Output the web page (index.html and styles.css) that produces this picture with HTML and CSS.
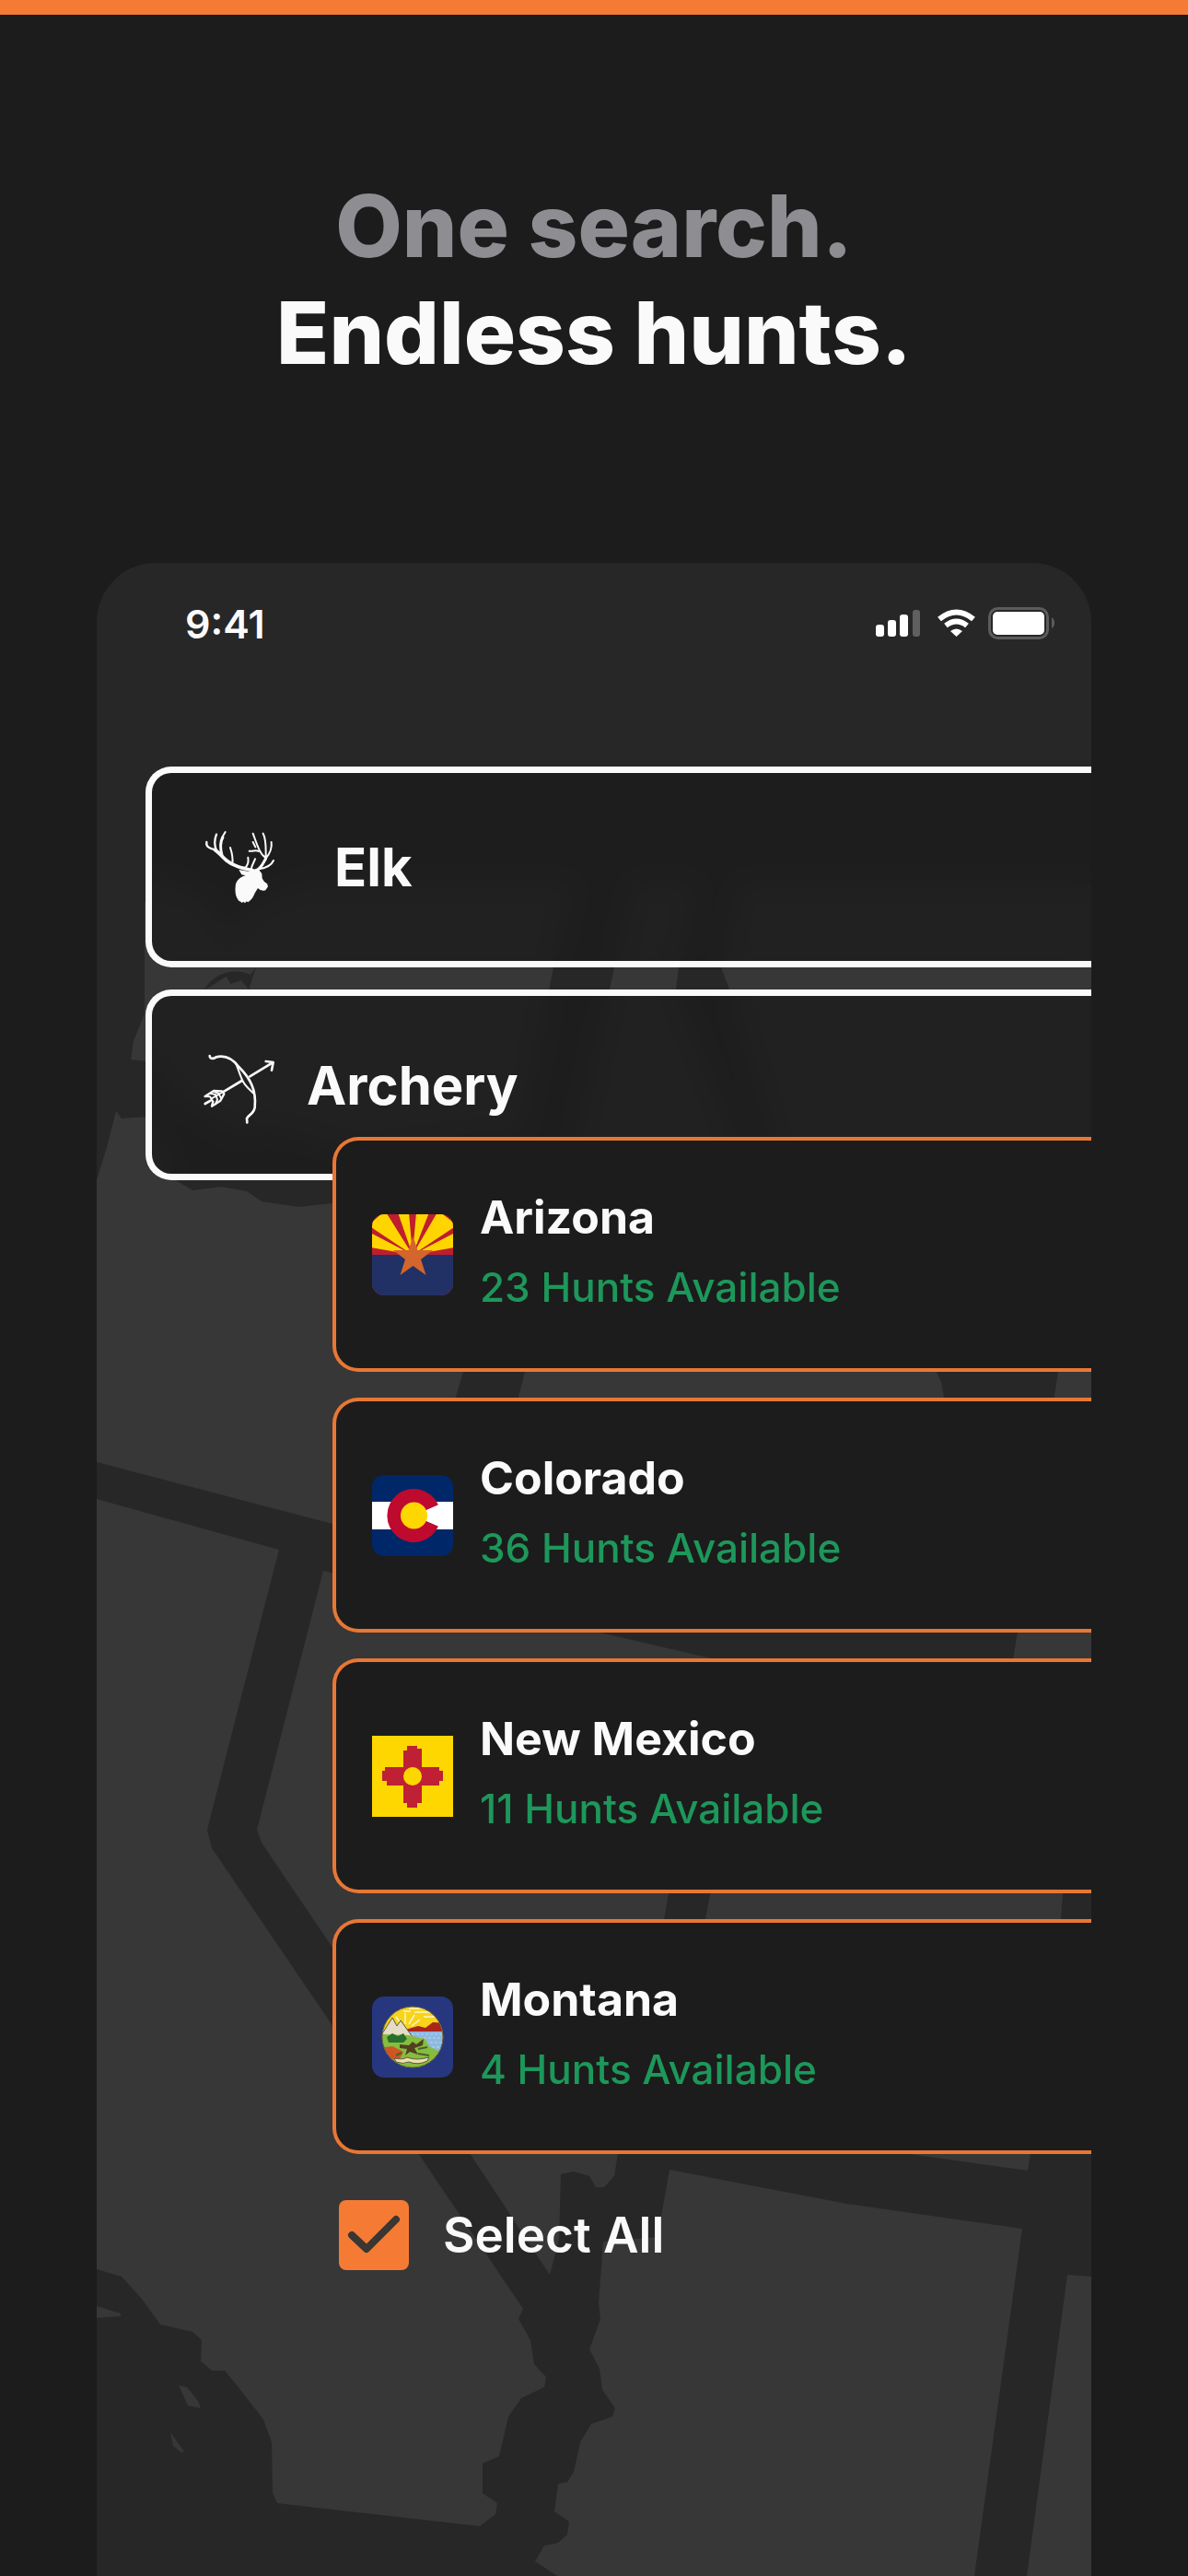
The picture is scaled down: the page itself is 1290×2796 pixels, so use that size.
FILE: index.html
```html
<!DOCTYPE html>
<html lang="en">
<head>
  <meta charset="UTF-8">
  <meta name="viewport" content="width=device-width, initial-scale=1">
  <title>One search. Endless hunts.</title>
  <link rel="stylesheet" href="styles.css">
</head>
<body>
  <h1 class="headline">
    <span class="headline-muted">One search.</span>
    <span>Endless hunts.</span>
  </h1>

  <main class="phone">
    <!-- Western states map -->
    <svg class="map" viewBox="105 611 1080 2185" preserveAspectRatio="xMidYMin slice" aria-hidden="true">
      <g fill="#373737">
        <!-- Washington -->
        <path d="M157 980L170 950L220 975L250 1010L270 985L330 960L620 960L601 1050L565 1230L380 1250L300 1225L250 1230L190 1190L160 1152L142 1150L145 1130L157 1100Z"/>
        <!-- Oregon -->
        <path d="M126 1206L132 1214L160 1212L180 1250L191 1281L209 1292L240 1288L268 1293L284 1304L324 1310L361 1306L560 1300L503 1489L495 1516L455 1678L361 1654L105 1587V1281L116 1245Z"/>
        <!-- Idaho -->
        <path d="M690 960H755L737 1050L734 1074L790 1220L850 1390L891 1489L1017 1489L1022 1500L1025 1516L990 1750L540 1640L563 1516L570 1489L640 1180L662 1074L667 1050Z"/>
        <!-- Montana -->
        <path d="M805 960H1185V1430H1010L860 1300L792 1074L783 1050Z"/>
        <!-- Wyoming -->
        <path d="M1149 1489H1185V1960L1080 1940L1100 1801L1105 1771Z"/>
        <!-- California -->
        <path d="M105 1627L303 1682L247 1900L225 1986L230 2006L362 2200L454 2337L568 2506L563 2517L576 2540L580 2566L593 2580L591 2591L566 2603L552 2623L542 2666L524 2674V2706L540 2717L538 2729L521 2742L301 2717L296 2706L295 2651L286 2626L261 2594L244 2573L230 2573L218 2563L219 2540L209 2531L174 2523L153 2494L132 2471L105 2463Z"/>
        <!-- Nevada -->
        <path d="M351 1705L647 1771L777 1801L726 2056L721 2083L671 2337L667 2362L656 2374H647L640 2362L623 2357L609 2360L607 2431L597 2469L510 2337L361 2114L284 2000L279 1986L301 1900Z"/>
        <!-- Utah -->
        <path d="M820 1811L1060 1860L1050 1960L1160 1985L1154 2056L1152 2083L1119 2337L1116 2356L994 2339L735 2285L766 2083L771 2056Z"/>
        <!-- Arizona -->
        <path d="M727 2355L920 2392L1110 2419L1058 2796H605L581 2780L591 2763L606 2760L616 2751L618 2737L602 2726L606 2696L616 2694L623 2683L630 2651L642 2631L665 2623L668 2614L654 2594L651 2571L640 2550L652 2517L650 2500L655 2433L714 2428Z"/>
        <!-- New Mexico -->
        <path d="M1159 2469L1185 2471V2796H1115Z"/>
        <!-- Channel Islands -->
        <path d="M105 2503L131 2511V2514L105 2516Z"/>
        <path d="M194 2589L203 2591L215 2606L218 2614L204 2611Z"/>
        <path d="M185 2640L200 2661L197 2662L188 2655Z"/>
      </g>
      <!-- Puget Sound -->
      <path fill="#272727" d="M222 1074C232 1056 255 1050 272 1058L278 1050L270 1074L262 1064L250 1068L246 1060C240 1062 232 1070 222 1074Z"/>
    </svg>

    <header class="status-bar">
      <time class="status-time">9:41</time>
      <svg class="status-icons" width="194" height="36" viewBox="951 660 194 36" aria-label="Signal, Wi-Fi and battery">
        <g fill="#fff">
          <rect x="951" y="679" width="9" height="13" rx="3"/>
          <rect x="964" y="674" width="9" height="18" rx="3"/>
          <rect x="977" y="668" width="9" height="24" rx="3"/>
          <rect x="991" y="663" width="8" height="29" rx="3" fill="#606060"/>
        </g>
        <g fill="none" stroke="#fff" stroke-width="6">
          <path d="M1020 673Q1038.500 658 1057 673"/>
          <path d="M1027 680Q1038.500 671 1050 680"/>
        </g>
        <path fill="#fff" d="M1032 686Q1038.500 681 1045 686L1038.500 692Z"/>
        <rect x="1074.500" y="661.500" width="63" height="32" rx="9" fill="none" stroke="#5c5c5c" stroke-width="3"/>
        <rect x="1078" y="665" width="56" height="25" rx="5" fill="#fff"/>
        <path fill="#5c5c5c" d="M1142 671Q1145 673 1145 677Q1145 681 1142 683Z"/>
      </svg>
    </header>

    <div class="filters">
      <button type="button" class="filter filter-species">
        <svg width="107" height="80" viewBox="66 63 321 240" aria-hidden="true">
          <g fill="none" stroke="#fafafa" stroke-linecap="round">
            <path stroke-width="11" d="M222 194C185 186 160 180 138 162C122 149 114 136 100 127"/>
            <path stroke-width="7" d="M100 127C84 123 70 118 73 102M106 132C97 112 99 92 105 77"/>
            <path stroke-width="9" d="M124 150C118 128 116 102 126 86"/>
            <path stroke-width="6" d="M124 86L134 69M157 172C160 150 155 135 150 120M196 187C208 180 210 165 208 152M218 192C220 175 228 168 231 157"/>
            <path stroke-width="9" d="M232 195C252 188 256 172 266 155"/>
            <path stroke-width="6" d="M266 155C280 138 287 122 284 102M266 152C266 125 268 92 257 74M264 152C246 140 238 112 224 74M242 132C232 126 224 134 212 131M232 118L224 102M244 190C266 186 284 178 291 162"/>
          </g>
          <path fill="#fafafa" d="M212 198L178 192L187 208L200 211C180 216 168 230 167 246C165 268 169 282 178 293L184 296L188 300L193 296L198 301L203 295L208 298L217 290C226 283 228 270 234 262L240 252C248 260 258 262 265 259L273 247L270 237C262 234 258 228 254 220L253 205L244 193L222 190Z"/>
        </svg>
        <span>Elk</span>
      </button>

      <button type="button" class="filter filter-weapon">
        <svg width="77" height="80" viewBox="66 56 231 240" overflow="visible" aria-hidden="true">
          <g fill="none" stroke="#fafafa" stroke-width="8" stroke-linecap="round" stroke-linejoin="round">
            <path d="M83 80C84 92 96 90 104 84C136 76 160 92 178 116C214 152 236 190 230 248C226 272 208 272 204 284L205 297"/>
            <path stroke-width="6" d="M168 104C178 126 182 146 192 164C200 180 214 190 228 204"/>
            <path d="M68 236L86 226M126 198L188 161M214 147L288 102"/>
            <path d="M266 98L290 101L285 127"/>
            <path stroke-width="7" d="M68 212L96 194L124 195L130 204L118 226L90 244L94 229"/>
            <path stroke-width="6" d="M68 212L84 213L94 229M84 202L102 206L108 222L102 237M96 195L112 203L120 217M88 220L122 200"/>
          </g>
        </svg>
        <span>Archery</span>
      </button>
    </div>

    <div class="results">
      <button type="button" class="state">
        <svg class="flag" viewBox="0 0 88 88" aria-hidden="true">
          <clipPath id="flag-shape"><rect width="88" height="88" rx="13"/></clipPath>
          <g clip-path="url(#flag-shape)">
            <rect width="88" height="88" fill="#be1e2d"/>
            <path fill="#ffd500" d="M44 44L-2 36V20ZM44 44L-4 12L14 -4ZM44 44L28 -2H40ZM44 44L48 -2H62ZM44 44L72 -4L92 12ZM44 44L90 20V36Z"/>
            <rect y="44" width="88" height="44" fill="#223165"/>
            <path fill="#d4652c" d="M44.500 24L49.500 39H66L53 49L58.500 66L44.500 56L30.500 66L36 49L23 39H39.500Z"/>
          </g>
        </svg>
        <span class="state-text">
          <span class="state-name">Arizona</span>
          <span class="state-count">23 Hunts Available</span>
        </span>
      </button>

      <button type="button" class="state">
        <svg class="flag" viewBox="0 0 88 88" aria-hidden="true">
          <rect width="88" height="88" rx="13" fill="#002868"/>
          <rect y="29" width="88" height="30" fill="#fff"/>
          <path fill="#bf0a30" d="M72 32.500A29 29 0 1 0 72 55.500L45 44Z"/>
          <path fill="#fff" d="M73 32L46 44L73 56Z"/>
          <circle cx="45.500" cy="44" r="14.500" fill="#ffd700"/>
        </svg>
        <span class="state-text">
          <span class="state-name">Colorado</span>
          <span class="state-count">36 Hunts Available</span>
        </span>
      </button>

      <button type="button" class="state">
        <svg class="flag" viewBox="0 0 88 88" aria-hidden="true">
          <rect width="88" height="88" fill="#ffd700"/>
          <path fill="#bf2033" d="M34 16H38V11H49V14H54V34H73V38H77V49H73V54H54V73H49V78H38V73H34V54H16V49H11V38H14V34H34Z"/>
          <circle cx="44" cy="44" r="10" fill="#ffd700"/>
        </svg>
        <span class="state-text">
          <span class="state-name">New Mexico</span>
          <span class="state-count">11 Hunts Available</span>
        </span>
      </button>

      <button type="button" class="state">
        <svg class="flag" viewBox="0 0 88 88" aria-hidden="true">
          <clipPath id="seal"><circle cx="44" cy="44" r="33"/></clipPath>
          <rect width="88" height="88" rx="13" fill="#27377f"/>
          <g clip-path="url(#seal)">
            <rect width="88" height="88" fill="#f7d31c"/>
            <path stroke="#fff8c8" stroke-width="1.500" fill="none" d="M36 30V18M32 31L26 22M40 30L46 20M29 33L20 27M43 32L52 25M40 13H60M46 17H66M56 22H72M34 16H42"/>
            <path fill="#a8261c" d="M36 36L50 32L58 34L66 28L80 29V40H36Z"/>
            <rect x="36" y="38" width="44" height="24" fill="#8db9e2"/>
            <path stroke="#b9d5ee" stroke-width="1" stroke-dasharray="3 2" fill="none" d="M38 41H78M46 45H78M58 50H78M60 55H78"/>
            <path fill="#e4dcc4" stroke="#5d5a45" stroke-width="1" d="M10 42L22 23L27 32L31 26L44 44Z"/>
            <path fill="#86bd3e" d="M8 41L40 42L58 46L62 54L78 62L70 80H10Z"/>
            <path fill="#26702c" d="M16 44L22 40L28 43L34 40L38 46L34 50H18Z"/>
            <path fill="#cf5524" d="M8 56L22 54L34 60L30 68H12Z"/>
            <path fill="#51401f" d="M30 52L40 53L44 49L48 52L56 46L55 53L46 56L50 63L41 60L36 64L38 57L30 56Z"/>
            <path fill="none" stroke="#49602e" stroke-width="2" d="M50 57L60 55M32 61L26 64M50 62L62 64"/>
            <path fill="#ebe2ab" stroke="#5d5a45" stroke-width="1" d="M24 67Q34 69 38 66Q48 70 62 66L60 70Q50 75 40 71Q34 74 26 71Z"/>
          </g>
          <circle cx="44" cy="44" r="33" fill="none" stroke="#72682f" stroke-width="1"/>
        </svg>
        <span class="state-text">
          <span class="state-name">Montana</span>
          <span class="state-count">4 Hunts Available</span>
        </span>
      </button>

      <label class="select-all">
        <span class="check">
          <input type="checkbox" class="check-input" checked>
          <svg class="check-mark" viewBox="0 0 76 76" aria-hidden="true">
            <path d="M14 38L30 53L62 21"/>
          </svg>
        </span>
        <span>Select All</span>
      </label>
    </div>
  </main>
</body>
</html>
```

FILE: styles.css
```css
* {
  box-sizing: border-box;
}

body {
  margin: 0;
  min-height: 100vh;
  display: flex;
  flex-direction: column;
  border-top: 16px solid #f57b35;
  background: #1c1c1c;
  color: #fafafa;
  font-family: Inter, "Liberation Sans", sans-serif;
}

button {
  font-family: inherit;
  color: inherit;
  text-align: left;
  cursor: pointer;
}

.headline {
  margin: 0;
  padding: 171px 0 192px;
  font-size: 94px;
  font-weight: 800;
  line-height: 116px;
  text-align: center;
}

.headline span {
  display: block;
}

.headline .headline-muted {
  color: #8e8d92;
}

.phone {
  position: relative;
  flex: 1;
  margin: 0 105px;
  overflow: hidden;
  border-radius: 64px 64px 0 0;
  background: #272727;
}

/* sits behind everything in the phone */
.map {
  position: absolute;
  top: 0;
  left: 0;
  width: 100%;
  height: 100%;
}

.status-bar,
.filters,
.results {
  position: relative;
}

.status-bar {
  display: flex;
  justify-content: space-between;
  align-items: center;
  padding: 41px 40px 0 96px;
}

.status-time {
  font-size: 43px;
  font-weight: 600;
  line-height: 50px;
}

.filters {
  display: flex;
  flex-direction: column;
  gap: 24px;
  padding: 130px 0 0 53px;
}

.filter {
  display: flex;
  align-items: center;
  gap: 34px;
  padding: 0 57px;
  border: 7px solid #fafafa;
  border-right: none;
  border-radius: 28px 0 0 28px;
  background: rgba(28, 28, 28, 0.8);
  backdrop-filter: blur(12px);
  font-size: 58px;
  font-weight: 700;
}

.filter-species {
  height: 218px;
}

.filter-weapon {
  height: 207px;
}

/* state list slides up over the weapon filter */
.results {
  display: flex;
  flex-direction: column;
  gap: 28px;
  margin-top: -47px;
  padding: 0 0 80px 256px;
}

.state {
  display: flex;
  align-items: center;
  gap: 29px;
  height: 255px;
  padding: 0 39px;
  border: 4px solid #e87735;
  border-right: none;
  border-radius: 28px 0 0 28px;
  background: #1c1c1c;
}

.flag {
  flex: none;
  width: 88px;
  height: 88px;
}

.state-text {
  display: flex;
  flex-direction: column;
  padding-bottom: 6px;
  line-height: 76px;
}

.state-name {
  font-size: 50px;
  font-weight: 700;
}

.state-count {
  font-size: 44px;
  font-weight: 500;
  color: #1d975a;
}

.select-all {
  display: flex;
  align-items: center;
  gap: 37px;
  padding: 22px 7px;
  font-size: 53px;
  font-weight: 600;
  cursor: pointer;
}

.check {
  position: relative;
  width: 76px;
  height: 76px;
}

.check-input {
  display: block;
  width: 100%;
  height: 100%;
  margin: 0;
  appearance: none;
  border-radius: 8px;
  background: #f57b35;
}

.check-mark {
  position: absolute;
  top: 0;
  left: 0;
  fill: none;
  stroke: #3a3632;
  stroke-width: 8;
  stroke-linecap: round;
  stroke-linejoin: round;
  pointer-events: none;
}

.check-input:not(:checked) + .check-mark {
  display: none;
}
```
